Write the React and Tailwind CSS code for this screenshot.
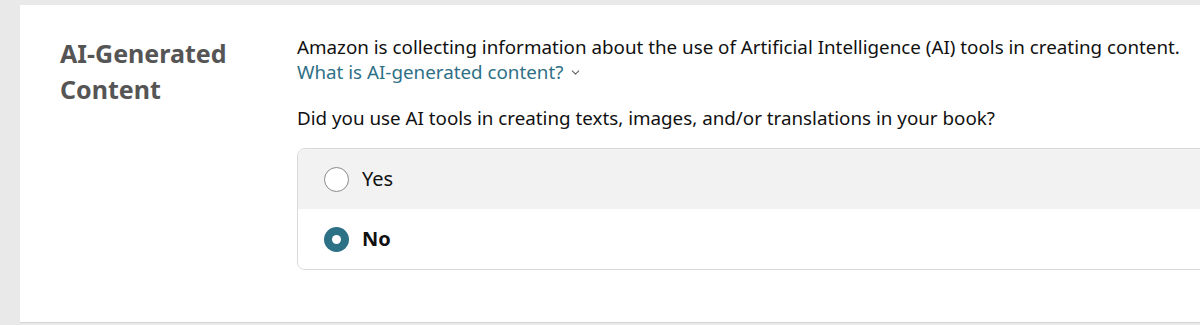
import { ChevronDown } from 'lucide-react';

const options = [
    { label: 'Yes', checked: false },
    { label: 'No', checked: true },
];

const Radio = ({ checked }) =>
    checked ? (
        <span className="flex items-center justify-center w-[25px] h-[25px] rounded-full bg-[#2d7187] shrink-0">
            <span className="w-[9px] h-[9px] rounded-full bg-white" />
        </span>
    ) : (
        <span className="w-[25px] h-[25px] rounded-full border-[1.5px] border-[#8a8a8a] bg-white shrink-0" />
    );

const App = () => (
    <div className="w-[1200px] h-[325px] bg-[#e9e9e9] pt-[5px] pl-[20px] overflow-hidden font-['Noto_Sans',sans-serif]">
        <div className="flex bg-white h-[318px] border-b border-[#d5d5d5] pl-[40px] pt-[30px]">
            <div className="w-[237px] shrink-0 text-[25px] leading-[36px] font-bold text-[#555555]">
                AI-Generated
                <br />
                Content
            </div>
            <div className="flex-1">
                <p className="text-[18.8px] leading-[25px] text-[#111111] whitespace-nowrap">
                    Amazon is collecting information about the use of Artificial Intelligence (AI) tools in creating content.
                </p>
                <a className="flex items-center gap-[6px] text-[18.8px] leading-[25px] text-[#2f7086]">
                    What is AI-generated content?
                    <ChevronDown className="w-[13px] h-[13px] text-[#666666]" strokeWidth={2} />
                </a>
                <p className="mt-[21px] text-[18.8px] leading-[25px] text-[#111111] whitespace-nowrap">
                    Did you use AI tools in creating texts, images, and/or translations in your book?
                </p>
                <div className="mt-[17px] w-[920px] border border-[#d9d9d9] rounded-lg overflow-hidden">
                    {options.map(({ label, checked }) => (
                        <div
                            key={label}
                            className={`flex items-center gap-[13px] h-[60px] pl-[26px] ${
                                checked ? 'bg-white' : 'bg-[#f2f2f2]'
                            }`}
                        >
                            <Radio checked={checked} />
                            <span className={`text-[20px] text-[#111111] ${checked ? 'font-bold' : ''}`}>{label}</span>
                        </div>
                    ))}
                </div>
            </div>
        </div>
    </div>
);

export default App;
